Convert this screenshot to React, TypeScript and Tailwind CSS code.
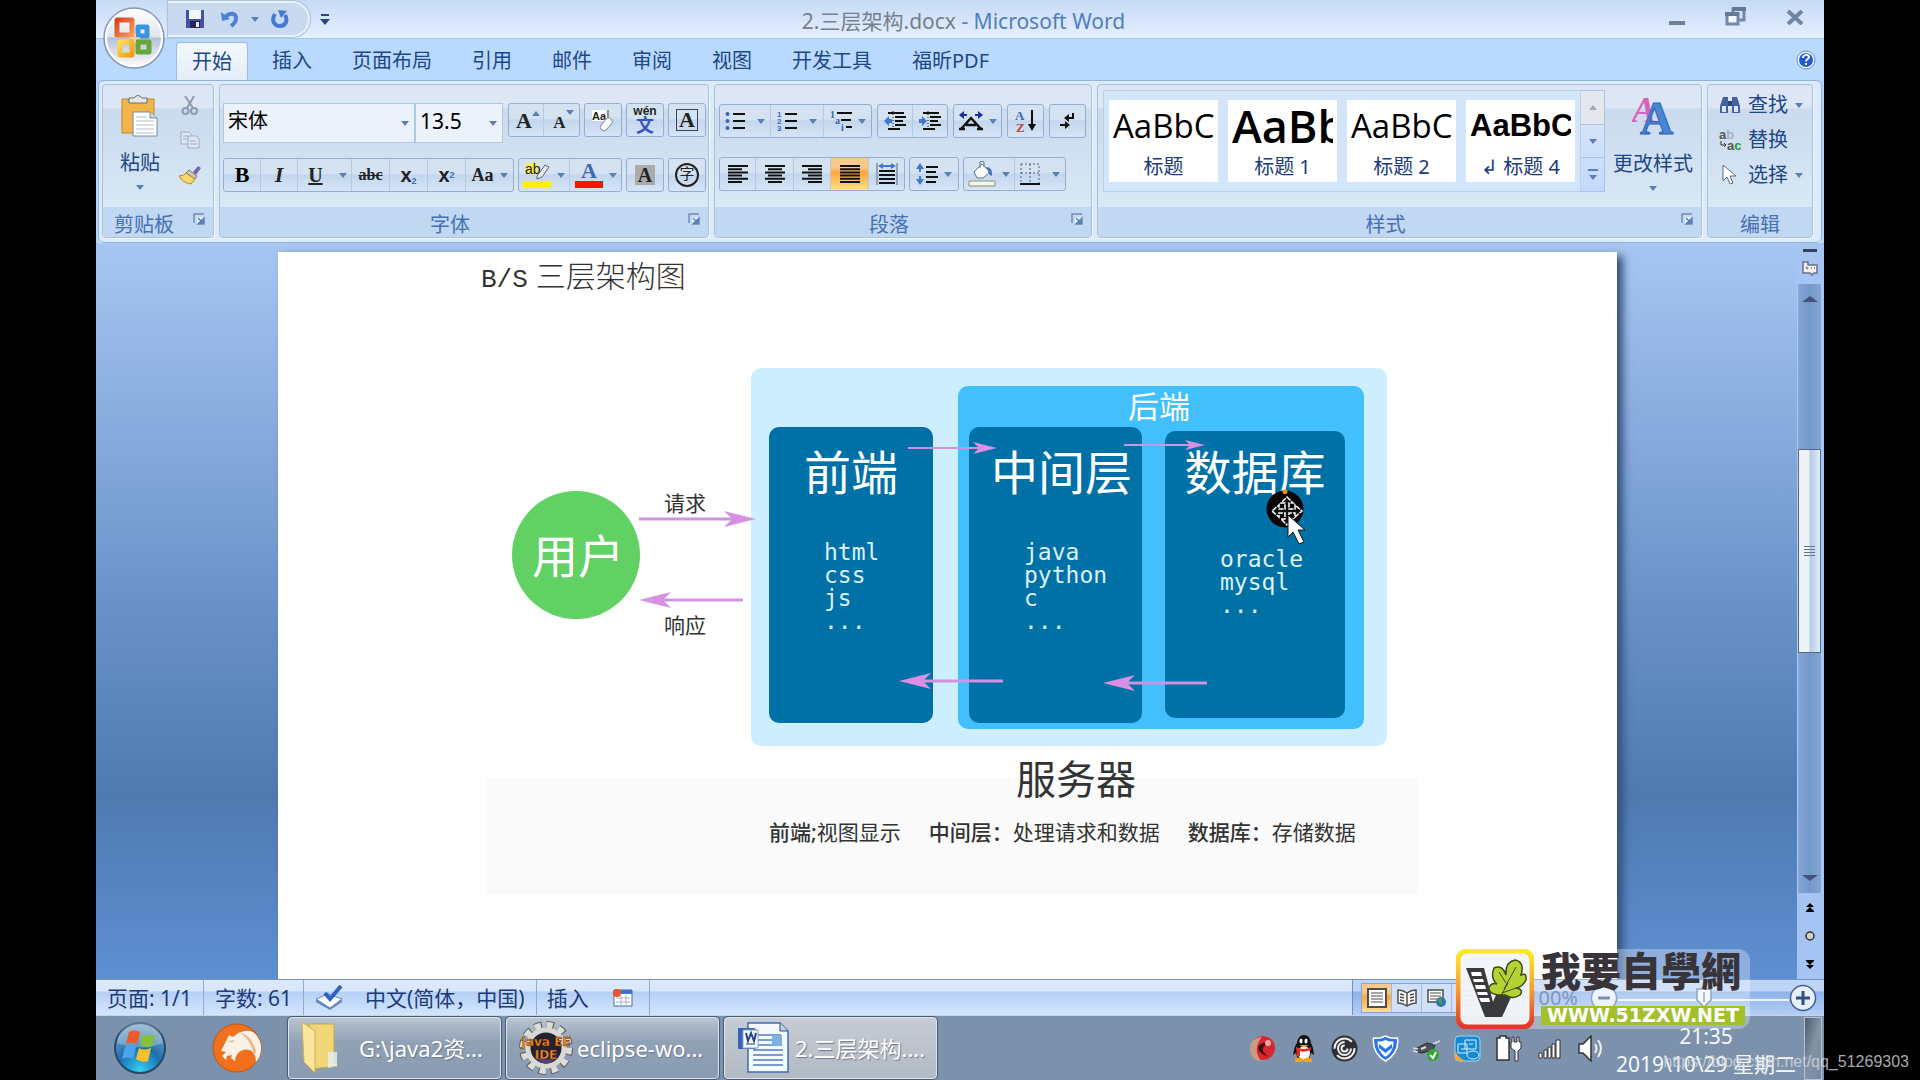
import type { ReactNode } from "react";
import { clsx } from "clsx";

const TABS = ["插入", "页面布局", "引用", "邮件", "审阅", "视图", "开发工具", "福昕PDF"];

const STYLES = [
  { name: "标题", sample: "AaBbC", className: "text-[33px]" },
  { name: "标题 1", sample: "AaBb", className: "text-[45px] font-semibold" },
  { name: "标题 2", sample: "AaBbC", className: "text-[33px]" },
  { name: "↲ 标题 4", sample: "AaBbC", className: "text-[31px] font-bold font-['Liberation_Sans']!" },
];

/* ---------- shared bits ---------- */

function Caret({ className }: { className?: string }) {
  return (
    <svg viewBox="0 0 8 5" className={clsx("h-[5px] w-2 shrink-0 fill-[#5b7fb5]", className)}>
      <path d="M0 0h8L4 5z" />
    </svg>
  );
}

function Launcher({ label }: { label: string }) {
  return (
    <button aria-label={label} className="absolute right-2 top-1.5">
      <svg viewBox="0 0 12 12" className="h-3 w-3" fill="none">
        <path d="M1 10V1h10" stroke="#6d8cba" strokeWidth="1.5" />
        <path d="M4 4h8v8H4z" fill="#eaf3fd" />
        <path d="M5 5l4 4M11 5v6H5z" stroke="#5a80b8" strokeWidth="1.5" fill="#5a80b8" />
      </svg>
    </button>
  );
}

interface RibbonGroupProps {
  title: string;
  className: string;
  launcher?: boolean;
  children: ReactNode;
}

function RibbonGroup({ title, className, launcher = true, children }: RibbonGroupProps) {
  return (
    <section
      className={clsx(
        "flex flex-col overflow-hidden rounded border border-[#a9c0dd] bg-linear-to-b from-[#dce6f4] from-15% via-[#cbdaec] via-16% to-[#d8e8f6] to-80% shadow-[1px_1px_0_#eef6fe]",
        className
      )}
    >
      <div className="h-[124px]">{children}</div>
      <div
        className={clsx(
          "relative h-[30px] bg-[#c0d8f1] pt-1.5 text-center leading-6 text-[#4671b3]",
          launcher && "pr-7"
        )}
      >
        {title}
        {launcher && <Launcher label={`${title}设置`} />}
      </div>
    </section>
  );
}

function ToolSet({ children }: { children: ReactNode }) {
  return (
    <div className="flex h-[34px] divide-x divide-[#b3c9e5] overflow-hidden rounded-[3px] border border-[#93aed2] bg-linear-to-b from-[#d5e2f2] from-45% via-[#c3d6ed] via-50% to-[#d6e5f6]">
      {children}
    </div>
  );
}

interface ToolProps {
  label: string;
  className: string;
  menu?: boolean;
  active?: boolean;
  children: ReactNode;
}

function Tool({ label, className, menu, active, children }: ToolProps) {
  return (
    <button
      aria-label={label}
      aria-pressed={active}
      className={clsx(
        "flex items-center justify-center gap-1.5 leading-none",
        active && "bg-linear-to-b from-[#fbc98a] from-30% via-[#fca53c] via-45% to-[#fee08a]",
        className
      )}
    >
      {children}
      {menu && <Caret />}
    </button>
  );
}

// Each row is [x1, x2]; rows are spread evenly over the icon's height
function Lines({ rows, className = "h-[18px] w-5" }: { rows: number[][]; className?: string }) {
  return (
    <svg viewBox="0 0 20 18" className={className} stroke="#111" strokeWidth="2">
      {rows.map(([a, b], i) => (
        <path key={i} d={`M${a} ${1 + (i * 16) / (rows.length - 1)}H${b}`} />
      ))}
    </svg>
  );
}

/* ---------- title bar and tabs ---------- */

function OfficeButton() {
  return (
    <button aria-label="Office 按钮" className="absolute left-[7px] top-1.5 z-10">
      <svg viewBox="0 0 62 64" className="h-16 w-[62px]">
        <defs>
          <linearGradient id="orb" x1="0" y1="0" x2="0" y2="1">
            <stop offset="0" stopColor="#ffffff" />
            <stop offset=".48" stopColor="#dfe5ef" />
            <stop offset=".5" stopColor="#b3c1d8" />
            <stop offset="1" stopColor="#ffffff" />
          </linearGradient>
          <linearGradient id="red" x1="0" y1="0" x2="1" y2="1">
            <stop offset="0" stopColor="#d9431c" />
            <stop offset="1" stopColor="#f79b5c" />
          </linearGradient>
          <linearGradient id="yellow" x1="0" y1="0" x2="1" y2="1">
            <stop offset="0" stopColor="#fddc4f" />
            <stop offset="1" stopColor="#f19a13" />
          </linearGradient>
        </defs>
        <circle cx="31" cy="32" r="30" fill="url(#orb)" stroke="#8296b8" strokeWidth="1.5" />
        <circle cx="31" cy="32" r="28" fill="none" stroke="#fff" strokeWidth="2" />
        <g fill="none" strokeLinejoin="round">
          <path d="M14 14h15v15H14z" stroke="url(#red)" strokeWidth="5" />
          <path d="M35 21h9v9h-9z" stroke="#3b94dc" strokeWidth="5" />
          <path d="M17 36h12v13H17z" stroke="url(#yellow)" strokeWidth="5" />
          <path d="M35 36h11v10H35z" stroke="#69a63a" strokeWidth="5" />
        </g>
        <path d="M27 32h10M32 27v10" stroke="#f4c9a0" strokeWidth="2" />
      </svg>
    </button>
  );
}

function TitleBar() {
  return (
    <header className="flex h-[38px] items-center bg-linear-to-b from-[#c6daf5] via-[#d6e4fb] to-[#e6f0fc]">
      <div className="ml-[72px] flex h-9 w-[142px] items-center rounded-r-full border-2 border-l-0 border-[#e9f2fd] bg-[#c9d9f0] pl-[17px] shadow-[0_0_1px_1px_#a9bfdd]">
        <button aria-label="保存">
          <svg viewBox="0 0 20 20" className="h-5 w-5">
            <path d="M1 1h18v18H1z" fill="#454fa8" />
            <path d="M4 1h12v9H4z" fill="#f2f6ff" />
            <path d="M5 12h10v7H5z" fill="#23264d" />
            <path d="M11 13h3v5h-3z" fill="#e4e8f8" />
          </svg>
        </button>
        <button aria-label="撤消" className="ml-4 flex items-center gap-3">
          <svg viewBox="0 0 18 18" className="h-[18px] w-[18px]">
            <path d="M4 7c5-5 11-4 11 1 0 3-2 6-5 8" fill="none" stroke="#4d82d6" strokeWidth="4" />
            <path d="M0 2l1 9 8-2z" fill="#4d82d6" />
          </svg>
          <Caret />
        </button>
        <button aria-label="恢复" className="ml-3">
          <svg viewBox="0 0 18 18" className="h-[18px] w-[18px]">
            <path d="M4 4c-4 6-1 12 5 12s8-6 5-11" fill="none" stroke="#4479d4" strokeWidth="4" />
            <path d="M7 0l9 1-6 7z" fill="#4479d4" />
          </svg>
        </button>
      </div>
      <button aria-label="自定义快速访问工具栏" className="ml-2.5">
        <svg viewBox="0 0 10 11" className="h-[11px] w-2.5 fill-[#27457c]">
          <path d="M1 0h8v2H1zM0 5h10l-5 6z" />
        </svg>
      </button>
      <h1 className="flex-1 whitespace-pre pr-[72px] pt-1 text-center text-[21px] text-[#4f7fc0]">
        <span className="text-[#74808f]">2.三层架构.docx</span> - Microsoft Word
      </h1>
      <div className="mr-5 flex items-center gap-10 pb-1">
        <button aria-label="最小化" className="pt-3">
          <svg viewBox="0 0 16 4" className="h-1 w-4">
            <path d="M0 0h16v4H0z" fill="#6d7f9c" />
          </svg>
        </button>
        <button aria-label="还原">
          <svg viewBox="0 0 21 20" className="h-5 w-[21px]" fill="none" stroke="#7488aa" strokeWidth="3">
            <path d="M8 6V2h11v11h-5" />
            <path d="M2 7h11v10H2z" fill="#f0f6ff" />
            <path d="M0 7h14M7 2h14" strokeWidth="4" stroke="#66789a" />
          </svg>
        </button>
        <button aria-label="关闭">
          <svg viewBox="0 0 18 15" className="h-[15px] w-[18px]">
            <path d="M2 1l14 13M16 1L2 14" stroke="#6f83a5" strokeWidth="4" />
          </svg>
        </button>
      </div>
    </header>
  );
}

function TabRow() {
  return (
    <nav className="flex h-[42px] items-end gap-2 border-t border-[#a5cbe4] bg-[#bad9ff] pl-20 text-[#1d4788]">
      <button className="h-[38px] rounded-t border border-b-0 border-[#9cbde8] bg-linear-to-b from-[#f3f8fe] to-[#e2edf9] px-[15px]">
        开始
      </button>
      {TABS.map((tab) => (
        <button key={tab} className="h-[38px] px-4">
          {tab}
        </button>
      ))}
      <button aria-label="帮助" className="mb-2.5 ml-auto mr-2">
        <svg viewBox="0 0 20 20" className="h-5 w-5">
          <circle cx="10" cy="10" r="9" fill="#f1f6ff" stroke="#6c8bbd" />
          <circle cx="10" cy="10" r="7" fill="#2259d6" />
          <path d="M7 8c0-4 6-4 6-1 0 2-3 2-3 4.500M10 13v2" fill="none" stroke="#fff" strokeWidth="2" />
        </svg>
      </button>
    </nav>
  );
}

/* ---------- ribbon groups ---------- */

function ClipboardGroup() {
  return (
    <RibbonGroup title="剪贴板" className="w-28">
      <div className="flex h-full pl-[14px] text-[#1d4788]">
        <button className="flex w-[46px] flex-col items-center pt-2.5">
          <svg viewBox="0 0 38 42" className="h-[42px] w-[38px]">
            <path d="M1 4h32v34H1z" fill="#f3b44c" stroke="#b98837" />
            <path d="M8 3h5q4-5 8 0h5v5H8z" fill="#e8e8e8" stroke="#6c6c6c" />
            <path d="M12 17h17l7 6v18H12z" fill="#fff" stroke="#7b89a5" />
            <path d="M29 17v6h7" fill="#cfdaec" stroke="#7b89a5" />
            <path d="M15 22h11M15 26h18M15 30h18M15 34h18M15 38h18" stroke="#b1bccd" />
          </svg>
          <span className="whitespace-nowrap pt-3">粘贴</span>
          <Caret className="mt-2" />
        </button>
        <div className="ml-4 flex flex-col items-center gap-4 pt-2.5">
          <button aria-label="剪切">
            <svg viewBox="0 0 18 20" className="h-5 w-[18px]" fill="none" stroke="#8c9bb3" strokeWidth="2">
              <path d="M4 1l8 12M13 1L6 13" />
              <circle cx="4.500" cy="16" r="3" />
              <circle cx="13" cy="16" r="3" />
            </svg>
          </button>
          <button aria-label="复制">
            <svg viewBox="0 0 20 18" className="h-[18px] w-5" fill="#dfe7f2" stroke="#9aaac4">
              <path d="M1 1h8l3 3v9H1z" />
              <path d="M8 5h8l3 3v9H8z" />
              <path d="M3 5h5M3 8h4M10 10h6M10 13h7" />
            </svg>
          </button>
          <button aria-label="格式刷">
            <svg viewBox="0 0 22 20" className="h-5 w-[22px]">
              <path d="M14 7l5-6 3 2-5 7z" fill="#7466b5" />
              <path d="M10 5l8 6-2 3-9-6z" fill="#c9c6c0" stroke="#8d7b52" />
              <path d="M7 8l9 6-4 5Q4 18 0 11q5 0 7-3z" fill="#f6d768" stroke="#b1893a" />
            </svg>
          </button>
        </div>
      </div>
    </RibbonGroup>
  );
}

function FontGroup() {
  return (
    <RibbonGroup title="字体" className="w-[490px]">
      <div className="flex flex-col gap-[15px] pl-[3px] pt-[18px] font-['Liberation_Serif','Noto_Sans_CJK_SC',serif] text-[#222]">
        <div className="flex h-10 items-start">
          <div className="relative">
            <select
              aria-label="字体"
              className="h-10 w-48 appearance-none border border-[#b0c8e6] bg-[#ebf2fb] pb-1 pl-1 font-['Noto_Sans','Noto_Sans_CJK_SC',sans-serif] text-xl text-black"
            >
              <option>宋体</option>
            </select>
            <Caret className="pointer-events-none absolute right-1.5 top-[18px]" />
          </div>
          <div className="relative">
            <select
              aria-label="字号"
              className="h-10 w-[88px] appearance-none border border-[#b0c8e6] bg-[#ebf2fb] pb-1 pl-1 font-['Noto_Sans',sans-serif] text-[21px] text-black"
            >
              <option>13.5</option>
            </select>
            <Caret className="pointer-events-none absolute right-1.5 top-[18px]" />
          </div>
          <div className="ml-[5px] flex gap-1">
            <ToolSet>
              <Tool label="增大字体" className="w-[35px] gap-0! pt-0.5 pl-1">
                <b className="text-[22px]">A</b>
                <Caret className="mb-4 rotate-180" />
              </Tool>
              <Tool label="缩小字体" className="w-[35px] gap-0! pl-1">
                <b className="pt-1 text-[17px]">A</b>
                <Caret className="mb-4" />
              </Tool>
            </ToolSet>
            <ToolSet>
              <Tool label="清除格式" className="w-9">
                <svg viewBox="0 0 24 24" className="h-6 w-6">
                  <path d="M1 2h17v11H1z" fill="#fff" />
                  <text x="1" y="12" fontSize="11" fontWeight="700" fontFamily="Liberation Sans" fill="#222">Aa</text>
                  <path d="M17 2v9" stroke="#222" />
                  <rect x="12" y="9" width="7" height="14" rx="3" fill="#fff" stroke="#8a93a5" transform="rotate(40 15 16)" />
                </svg>
              </Tool>
            </ToolSet>
            <ToolSet>
              <Tool label="拼音指南" className="w-9 flex-col gap-0!">
                <span className="font-['Liberation_Sans'] text-[12px] font-bold leading-[12px]">wén</span>
                <span className="text-lg font-bold leading-[18px] text-[#3356c4]">文</span>
              </Tool>
            </ToolSet>
            <ToolSet>
              <Tool label="字符边框" className="w-9">
                <b className="h-[22px] w-[22px] border border-[#39465c] text-center text-[22px] leading-5">A</b>
              </Tool>
            </ToolSet>
          </div>
        </div>
        <div className="flex gap-1">
          <ToolSet>
            <Tool label="加粗" className="w-[37px]"><b className="text-[22px] text-black">B</b></Tool>
            <Tool label="倾斜" className="w-[37px]"><i className="text-[22px] font-bold">I</i></Tool>
            <Tool label="下划线" menu className="w-[54px] gap-4! pl-1.5"><b className="text-xl/none underline">U</b></Tool>
            <Tool label="删除线" className="w-[38px]"><s className="text-base/none font-bold">abc</s></Tool>
            <Tool label="下标" className="w-[38px] font-['Liberation_Sans']">
              <b className="text-xl/none">x<sub className="text-[9px] text-[#3f6cc0]">2</sub></b>
            </Tool>
            <Tool label="上标" className="w-[38px] font-['Liberation_Sans']">
              <b className="text-xl/none">x<sup className="text-[9px] text-[#3f6cc0]">2</sup></b>
            </Tool>
            <Tool label="更改大小写" menu className="w-[47px]"><b className="text-lg/none">Aa</b></Tool>
          </ToolSet>
          <ToolSet>
            <Tool label="突出显示" menu className="w-[51px]">
              <svg viewBox="0 0 28 26" className="h-[26px] w-7">
                <path d="M3 1h11v11H3z" fill="#fbf04a" />
                <text x="2" y="12" fontSize="14" fontFamily="Liberation Sans" fill="#222">ab</text>
                <path d="M14 14l8-11 4 2-7 10-5 2z" fill="#e8eaf0" stroke="#59647a" />
                <path d="M0 19h28v7H0z" fill="#ffef00" />
              </svg>
            </Tool>
            <Tool label="字体颜色" menu className="w-[51px]">
              <svg viewBox="0 0 28 26" className="h-[26px] w-7">
                <text x="6" y="16" fontSize="22" fontWeight="700" fontFamily="Liberation Serif" fill="#3f68b5">A</text>
                <path d="M0 19h28v7H0z" fill="#fb1405" />
              </svg>
            </Tool>
          </ToolSet>
          <ToolSet>
            <Tool label="字符底纹" className="w-9">
              <b className="w-5 bg-[#ababab] text-center text-xl/none">A</b>
            </Tool>
          </ToolSet>
          <ToolSet>
            <Tool label="带圈字符" className="w-9">
              <span className="h-6 w-6 rounded-full border-2 border-[#222] text-center text-[15px] leading-[19px]">字</span>
            </Tool>
          </ToolSet>
        </div>
      </div>
    </RibbonGroup>
  );
}

function ListIcon({ marks }: { marks?: string[] }) {
  return (
    <svg viewBox="0 0 20 20" className="h-5 w-5">
      <path d="M8 3h12M8 10h12M8 17h12" stroke="#111" strokeWidth="2" />
      {marks
        ? marks.map((mark, i) => (
            <text key={mark} x="0" y={6 + i * 7} fontSize="8" fontWeight="700" fontFamily="Liberation Sans" fill="#3a66ba">
              {mark}
            </text>
          ))
        : [3, 10, 17].map((y) => <circle key={y} cx="2.500" cy={y} r="2" fill="#3a66ba" />)}
    </svg>
  );
}

function IndentIcon({ flip }: { flip?: boolean }) {
  return (
    <svg viewBox="0 0 22 20" className="h-5 w-[22px]">
      <path d="M4 2h16M11 6h11M11 10h8M11 14h11M4 18h12" stroke="#111" strokeWidth="2" />
      <path d="M9 0v20" stroke="#111" strokeDasharray="1 2" />
      <path d={flip ? "M8 10L3 5v3H0v4h3v3z" : "M0 10l5-5v3h3v4H5v3z"} fill="#3f78d0" />
    </svg>
  );
}

function ParagraphGroup() {
  return (
    <RibbonGroup title="段落" className="w-[378px]">
      <div className="flex flex-col gap-[19px] pl-1 pt-[19px]">
        <div className="flex gap-[5px]">
          <ToolSet>
            <Tool label="项目符号" menu className="w-[51px] gap-3!"><ListIcon /></Tool>
            <Tool label="编号" menu className="w-[53px] gap-3!"><ListIcon marks={["1", "2", "3"]} /></Tool>
            <Tool label="多级列表" menu className="w-[47px]">
              <svg viewBox="0 0 22 22" className="h-[22px] w-[22px]">
                <path d="M7 3h15M11 10h10M16 17h6" stroke="#111" strokeWidth="2" />
                <g fontSize="10" fontWeight="700" fontFamily="Liberation Serif" fill="#3a66ba">
                  <text x="0" y="8">1</text>
                  <text x="5" y="14">a</text>
                  <text x="11" y="21">i</text>
                </g>
              </svg>
            </Tool>
          </ToolSet>
          <ToolSet>
            <Tool label="减少缩进量" className="w-[35px]"><IndentIcon /></Tool>
            <Tool label="增加缩进量" className="w-[34px]"><IndentIcon flip /></Tool>
          </ToolSet>
          <ToolSet>
            <Tool label="中文版式" menu className="w-[47px]">
              <svg viewBox="0 0 24 20" className="h-5 w-6" fill="none">
                <path d="M2 18L12 7l10 11M7 14h10M0 18h6M18 18h6" stroke="#111" strokeWidth="2.500" />
                <path d="M0 4l5-4v3h3v2H5v3zM24 4l-5-4v3h-3v2h3v3z" fill="#1e2fae" />
              </svg>
            </Tool>
          </ToolSet>
          <ToolSet>
            <Tool label="排序" className="w-[35px]">
              <svg viewBox="0 0 22 24" className="h-6 w-[22px]">
                <text x="0" y="11" fontSize="13" fontFamily="Liberation Serif" fontWeight="700" fill="#3966bb">A</text>
                <text x="1" y="23" fontSize="13" fontFamily="Liberation Serif" fontWeight="700" fill="#b5443f">Z</text>
                <path d="M17 1v18" stroke="#111" strokeWidth="2" />
                <path d="M13 15h8l-4 7z" fill="#111" />
              </svg>
            </Tool>
          </ToolSet>
          <ToolSet>
            <Tool label="显示编辑标记" className="w-[35px]">
              <svg viewBox="0 0 16 18" className="h-[18px] w-4">
                <path d="M13 1v5H8M0 13h7" fill="none" stroke="#111" strokeWidth="2" />
                <path d="M4 6l5-4v8zM10 13l-5-4v8z" fill="#111" />
              </svg>
            </Tool>
          </ToolSet>
        </div>
        <div className="flex gap-1">
          <ToolSet>
            <Tool label="左对齐" className="w-9"><Lines rows={[[0, 20], [0, 14], [0, 20], [0, 14], [0, 20], [0, 14]]} /></Tool>
            <Tool label="居中" className="w-[38px]"><Lines rows={[[0, 20], [3, 17], [0, 20], [3, 17], [0, 20], [3, 17]]} /></Tool>
            <Tool label="右对齐" className="w-[37px]"><Lines rows={[[0, 20], [6, 20], [0, 20], [6, 20], [0, 20], [6, 20]]} /></Tool>
            <Tool label="两端对齐" active className="w-[38px]"><Lines rows={[[0, 20], [0, 20], [0, 20], [0, 20], [0, 20], [0, 20]]} /></Tool>
            <Tool label="分散对齐" className="w-[35px]">
              <svg viewBox="0 0 22 22" className="h-[22px] w-[22px]">
                <path d="M3 8h16M3 12h16M3 16h16M3 20h16" stroke="#111" strokeWidth="2" />
                <path d="M1 0v22M21 0v22" stroke="#56627a" />
                <path d="M2 3l5-3v2h8V0l5 3-5 3V4H7v2z" fill="#3f78d0" />
              </svg>
            </Tool>
          </ToolSet>
          <ToolSet>
            <Tool label="行距" menu className="w-12">
              <svg viewBox="0 0 22 24" className="h-6 w-[22px]">
                <path d="M10 5h12M10 10h10M10 15h12M10 20h10" stroke="#111" strokeWidth="2" />
                <path d="M4 1l4 6H5v3H3V7H0zM4 23l4-6H5v-3H3v3H0z" fill="#3f78d0" />
              </svg>
            </Tool>
          </ToolSet>
          <ToolSet>
            <Tool label="底纹" menu className="w-[51px]">
              <svg viewBox="0 0 28 26" className="h-[26px] w-7">
                <path d="M6 11l8-8 8 8-7 6H9z" fill="#fff" stroke="#62708a" />
                <path d="M12 7V1q2-2 4 0v5" fill="none" stroke="#62708a" />
                <path d="M18 6q7 0 6 9-4-2-4-5z" fill="#4475c8" />
                <path d="M1 20h26v5H1z" fill="#f4f4ee" stroke="#8c9270" />
              </svg>
            </Tool>
            <Tool label="边框" menu className="w-[50px] gap-3!">
              <svg viewBox="0 0 20 22" className="h-[22px] w-5" fill="none" stroke="#56627a">
                <path d="M1 1h18v19M1 1v19M10 1v19M1 10h18" strokeDasharray="2 2" />
                <path d="M0 21h20" stroke="#111" strokeWidth="2" />
              </svg>
            </Tool>
          </ToolSet>
        </div>
      </div>
    </RibbonGroup>
  );
}

function StylesGroup() {
  return (
    <RibbonGroup title="样式" className="flex-1">
      <div className="flex pl-[5px] pt-[5px]">
        <div className="flex h-[102px] items-center gap-[10px] border border-[#b9cfeb] bg-[#d3e5f9] px-[5px]">
          {STYLES.map((style) => (
            <button key={style.name} className="flex h-[82px] w-[109px] flex-col overflow-hidden bg-white px-1">
              <span className={clsx("h-[52px] w-full overflow-hidden whitespace-nowrap text-left font-['Open_Sans'] leading-[52px] text-black", style.className)}>
                {style.sample}
              </span>
              <span className="w-full text-center leading-[30px] text-[#1b3a80]">{style.name}</span>
            </button>
          ))}
        </div>
        <div className="flex h-[102px] w-6 flex-col divide-y divide-[#a9c3e6] border border-l-0 border-[#a9c3e6] bg-linear-to-b from-[#dbe9fa] to-[#c4dafa]">
          <button aria-label="向上" className="flex flex-1 items-center justify-center bg-[#e4e8ee]">
            <Caret className="rotate-180 fill-[#a5a9b0]!" />
          </button>
          <button aria-label="向下" className="flex flex-1 items-center justify-center">
            <Caret />
          </button>
          <button aria-label="其他" className="flex flex-1 flex-col items-center justify-center gap-1">
            <span className="h-0.5 w-2.5 bg-[#5b7fb5]" />
            <Caret />
          </button>
        </div>
        <button className="flex flex-1 flex-col items-center pt-1.5 text-[#1d4788]">
          <svg viewBox="0 0 42 40" className="h-10 w-[42px]" fontFamily="Liberation Serif" fontWeight="700">
            <text x="0" y="26" fontSize="36" fontStyle="italic" fill="#d363bd">A</text>
            <text x="8" y="38" fontSize="46" fill="#4a85d6" stroke="#2e62b3">A</text>
          </svg>
          <span className="whitespace-nowrap pt-3.5">更改样式</span>
          <Caret className="mt-2" />
        </button>
      </div>
    </RibbonGroup>
  );
}

function EditGroup() {
  return (
    <RibbonGroup title="编辑" className="w-[106px]" launcher={false}>
      <div className="flex flex-col gap-[7px] pl-[11px] pt-1.5 text-[#1d4788]">
        <button className="flex items-center gap-[7px]">
          <svg viewBox="0 0 22 20" className="h-5 w-[22px]">
            <path d="M1 11L4 2h5v16H1zM21 11l-3-9h-5v16h8z" fill="#42639f" />
            <path d="M9 6h4v5H9z" fill="#2b4678" />
            <path d="M3 11h4v6H3zM15 11h4v6h-4z" fill="#dbe7fa" />
          </svg>
          查找
          <Caret />
        </button>
        <button className="flex items-center gap-[7px]">
          <svg viewBox="0 0 22 20" className="h-5 w-[22px]" fontSize="13" fontWeight="700" fontFamily="Liberation Sans">
            <text x="0" y="9" fill="#555">a<tspan fill="#a7b2c4">b</tspan></text>
            <text x="8" y="20" fill="#555">a<tspan fill="#1f9a2b">c</tspan></text>
            <path d="M2 11v4h5M5 13l2 2-2 2" fill="none" stroke="#333" />
          </svg>
          替换
        </button>
        <button className="flex items-center gap-[7px]">
          <svg viewBox="0 0 22 20" className="h-5 w-[22px]">
            <path d="M4 0v16l4-4 3 7 3-1-3-7h6z" fill="#fff" stroke="#5f6d86" />
          </svg>
          选择
          <Caret />
        </button>
      </div>
    </RibbonGroup>
  );
}

function Ribbon() {
  return (
    <div className="mx-0.5 flex h-[163px] gap-[5px] rounded-md border border-[#8fb4dd] bg-[#dcebf9] pb-1 pl-[3px] pr-2 pt-[3px] shadow-[0_2px_0_#c9f0fa]">
      <ClipboardGroup />
      <FontGroup />
      <ParagraphGroup />
      <StylesGroup />
      <EditGroup />
    </div>
  );
}

/* ---------- document ---------- */

// Concave arrow head at x2, pointing away from x1
function Arrow({ x1, x2, y, half = 8 }: { x1: number; x2: number; y: number; half?: number }) {
  const dir = x2 > x1 ? -1 : 1;
  const back = x2 + dir * half * 4;
  const notch = x2 + dir * half * 3;
  return (
    <g fill="#da90e2">
      <path d={`M${x1} ${y}H${notch}`} stroke="#cf93e3" strokeWidth={half > 6 ? 3 : 2} />
      <path d={`M${x2} ${y}L${back} ${y - half}L${notch} ${y}L${back} ${y + half}z`} />
    </g>
  );
}

interface LayerBoxProps {
  title: string;
  items: string[];
  className: string;
  listClassName: string;
}

function LayerBox({ title, items, className, listClassName }: LayerBoxProps) {
  return (
    <div className={clsx("absolute rounded-[10px] bg-[#0071a7] text-white", className)}>
      <h3 className="whitespace-nowrap text-center text-[47px] leading-[47px]">{title}</h3>
      <ul className={clsx("pl-[55px] font-['DejaVu_Sans_Mono',monospace] text-[23px] leading-[23px] text-[#dcf1fb]", listClassName)}>
        {items.map((item) => (
          <li key={item}>{item}</li>
        ))}
      </ul>
    </div>
  );
}

function MovePointer() {
  return (
    <svg viewBox="0 0 42 56" className="absolute left-[785px] top-[150px] h-14 w-[42px]">
      <circle cx="19" cy="19" r="18.500" fill="#0b0508" />
      <circle cx="19" cy="1.500" r="2.500" fill="#e0920f" />
      <path d="M21 7l6 6h-4v6h6v-4l7 6-7 6v-4h-6v6h4l-6 6-6-6h4v-6h-6v4l-7-6 7-6v4h6v-6h-4z" fill="#111" stroke="#fff" strokeWidth="1.500" strokeDasharray="5 1" />
      <path d="M22 25v22l5-5 6 12 5-2-6-12h7z" fill="#fff" stroke="#111" />
    </svg>
  );
}

function Diagram() {
  return (
    <figure className="relative mt-[45px] h-[560px] w-full text-[#333]">
      <div className="absolute bottom-[5px] left-[5px] right-[-5px] h-[117px] bg-[#fafafa]" />
      <div className="absolute left-[270px] top-7 h-[378px] w-[636px] rounded-[10px] bg-[#cdeefe]" />
      <div className="absolute left-[477px] top-[46px] h-[343px] w-[406px] rounded-[10px] bg-[#41c0fd] pr-1 pt-1 text-center text-[31px] leading-8 text-white">
        后端
      </div>
      <LayerBox
        title="前端"
        items={["html", "css", "js", "..."]}
        className="left-[288px] top-[87px] h-[296px] w-[164px] pt-[22px]"
        listClassName="mt-[45px]"
      />
      <LayerBox
        title="中间层"
        items={["java", "python", "c", "..."]}
        className="left-[488px] top-[87px] h-[296px] w-[173px] pl-3 pt-[22px]"
        listClassName="mt-[45px] -ml-3"
      />
      <LayerBox
        title="数据库"
        items={["oracle", "mysql", "..."]}
        className="left-[684px] top-[91px] h-[287px] w-[180px] pt-[18px]"
        listClassName="mt-[52px]"
      />
      <div className="absolute left-[31px] top-[151px] flex h-32 w-32 items-center justify-center rounded-full bg-[#61d164] pl-1 text-[46px] text-white">
        用户
      </div>
      <span className="absolute left-[183px] top-[151px] text-[21px] leading-6">请求</span>
      <span className="absolute left-[183px] top-[273px] text-[21px] leading-6">响应</span>
      <svg viewBox="0 0 933 560" className="absolute left-0 top-0 h-[560px] w-[933px]">
        <Arrow x1={158} x2={275} y={179} />
        <Arrow x1={262} x2={158} y={260} />
        <Arrow x1={427} x2={516} y={108} half={6} />
        <Arrow x1={643} x2={724} y={105} half={5} />
        <Arrow x1={522} x2={418} y={341} />
        <Arrow x1={726} x2={622} y={343} />
      </svg>
      <strong className="absolute left-[535px] top-[419px] text-[40px] font-normal leading-10">服务器</strong>
      <figcaption className="absolute left-[288px] top-[480px] flex gap-7 whitespace-nowrap text-[21px] leading-6">
        <span><b className="font-medium">前端;</b>视图显示</span>
        <span><b className="font-medium">中间层：</b>处理请求和数据</span>
        <span><b className="font-medium">数据库：</b>存储数据</span>
      </figcaption>
      <MovePointer />
    </figure>
  );
}

function ScrollBar() {
  return (
    <div className="flex w-[27px] flex-col items-center bg-[#a5c4f3] pr-0.5 pt-1.5">
      <span className="h-[3px] w-3.5 bg-[#33445f]" />
      <svg viewBox="0 0 18 16" className="my-2 h-4 w-[18px]" fill="#f3eee9" stroke="#67718a" strokeWidth="1.500">
        <path d="M2 2h5v3h9v8h-3l-2 2-2-2H2z" />
        <path d="M5 7l2 2M10 8h1M13 8h1" />
      </svg>
      <div className="flex w-full flex-1 flex-col items-center border-x border-[#a7caf6] bg-linear-to-r from-[#86a7d6] via-[#7298ca] to-[#86a5d2]">
        <button aria-label="向上滚动" className="py-3">
          <svg viewBox="0 0 16 6" className="h-1.5 w-4 fill-[#41537f]"><path d="M8 0l8 6H0z" /></svg>
        </button>
        <div className="mt-[135px] flex h-[204px] w-full flex-col items-center justify-center gap-0.5 border border-[#56688a] bg-linear-to-r from-[#edf2f6] from-45% via-[#b7cce6] via-55% to-[#e2edf8]">
          <span className="h-px w-[11px] bg-[#63738e]" />
          <span className="h-px w-[11px] bg-[#63738e]" />
          <span className="h-px w-[11px] bg-[#63738e]" />
          <span className="h-px w-[11px] bg-[#63738e]" />
        </div>
        <button aria-label="向下滚动" className="mt-auto py-3">
          <svg viewBox="0 0 16 6" className="h-1.5 w-4 fill-[#41537f]"><path d="M0 0h16L8 6z" /></svg>
        </button>
      </div>
      <div className="flex flex-col items-center gap-[18px] py-2.5">
        <button aria-label="前一页">
          <svg viewBox="0 0 8 10" className="h-2.5 w-2"><path d="M4 0l4 4H0zM4 4l4 4H0zM0 8h8v1H0z" /></svg>
        </button>
        <button aria-label="选择浏览对象">
          <svg viewBox="0 0 10 10" className="h-2.5 w-2.5"><circle cx="5" cy="5" r="4" fill="#cfcfc6" stroke="#333" strokeWidth="1.500" /></svg>
        </button>
        <button aria-label="下一页">
          <svg viewBox="0 0 8 10" className="h-2.5 w-2"><path d="M0 1h8v1H0zM0 2h8L4 6zM0 6h8l-4 4z" /></svg>
        </button>
      </div>
    </div>
  );
}

function Workspace() {
  return (
    <main className="flex flex-1 bg-[linear-gradient(#a7c6f2,#6991c8_50%,#4f7ab0_75%,#5f8fd2)]">
      <div className="flex flex-1 justify-center pl-0.5 pt-[9px]">
        <article className="w-[1339px] bg-white px-[203px] shadow-[6px_4px_8px_#36517c]">
          <h2 className="flex h-[43px] items-baseline gap-2 font-['Noto_Sans_CJK_SC',sans-serif] text-[30px] font-light leading-[44px] text-[#333]">
            <span className="font-['Liberation_Mono'] text-[26px]">B/S</span>三层架构图
          </h2>
          <Diagram />
        </article>
      </div>
      <ScrollBar />
    </main>
  );
}

/* ---------- status bar ---------- */

function StatusBar() {
  return (
    <footer className="flex h-9 items-stretch border-t border-[#7793bd] bg-linear-to-b from-[#dbe8fc] from-30% via-[#b5d0f6] via-35% to-[#d3e5fd] text-[21px] text-[#1e3a78]">
      <button className="px-[11px]">页面: 1/1</button>
      <span className="w-px bg-[#8fabd6]" />
      <button className="px-[11px]">字数: 61</button>
      <span className="w-px bg-[#8fabd6]" />
      <button aria-label="校对" className="pl-[11px] pr-[22px]">
        <svg viewBox="0 0 28 26" className="h-[26px] w-7">
          <path d="M1 14l12-5 14 5-12 9z" fill="#fff" stroke="#6f85ad" />
          <path d="M1 14v3l14 8 12-8v-3l-12 9z" fill="#5f86c8" />
          <path d="M10 8l5 6L26 1" fill="none" stroke="#2f64c4" strokeWidth="4" />
        </svg>
      </button>
      <button className="pr-[11px]">中文(简体，中国)</button>
      <span className="w-px bg-[#8fabd6]" />
      <button className="pl-2.5 pr-6">插入</button>
      <button aria-label="录制宏" className="pr-4">
        <svg viewBox="0 0 20 18" className="h-[18px] w-5">
          <path d="M1 1h18v16H1z" fill="#fff" stroke="#51689a" />
          <path d="M1 1h18v4H1z" fill="#3c73cf" />
          <path d="M3 9h14M3 13h14M8 6v10M13 6v10" stroke="#9fb2d3" />
          <circle cx="4" cy="4" r="4" fill="#e8552d" />
        </svg>
      </button>
      <span className="w-px bg-[#8fabd6]" />
      <div className="ml-auto flex items-center border-l border-[#6d8fc2] bg-linear-to-b from-[#bfd5f7] from-30% via-[#8fb2e8] via-35% to-[#b3cff8] pl-2 pr-[7px]">
        <div className="flex h-[30px] divide-x divide-[#9fbce6] border border-[#88a5d2] bg-[#cfe0f8]">
          <Tool label="页面视图" active className="w-[30px]">
            <svg viewBox="0 0 20 20" className="h-5 w-5" fill="#fff" stroke="#4d4d4d" strokeWidth="2">
              <path d="M1 1h18v18H1z" />
              <path d="M4 5h12M4 8h12M4 11h12M4 14h12" strokeWidth="1" />
            </svg>
          </Tool>
          <Tool label="阅读版式" className="w-[30px]">
            <svg viewBox="0 0 20 20" className="h-5 w-5" fill="#fff" stroke="#4d4d4d" strokeWidth="1.500">
              <path d="M1 2q5 0 9 3 4-3 9-3v13q-5 0-9 3-4-3-9-3zM10 5v13" />
              <path d="M3 6l4 1M3 9l4 1M3 12l4 1M17 6l-4 1M17 9l-4 1M17 12l-4 1" />
            </svg>
          </Tool>
          <Tool label="Web 版式" className="w-[30px]">
            <svg viewBox="0 0 20 20" className="h-5 w-5">
              <path d="M1 2h15v12H1z" fill="#fff" stroke="#4d4d4d" strokeWidth="1.500" />
              <path d="M3 5h11M3 8h11M3 11h8" stroke="#4d4d4d" />
              <circle cx="14" cy="14" r="5" fill="#2e77b4" />
              <path d="M11 12q3-3 4 0t-2 4z" fill="#4aa04b" />
            </svg>
          </Tool>
          <Tool label="大纲视图" className="w-[30px]"><Lines rows={[[0, 20], [4, 20], [0, 20], [4, 20]]} className="h-4 w-5 opacity-50" /></Tool>
          <Tool label="普通视图" className="w-[30px]"><Lines rows={[[0, 20], [0, 20], [0, 20], [0, 20]]} className="h-4 w-5 opacity-50" /></Tool>
        </div>
        <button className="pl-[14px] text-xl/7 text-[#4665a5]">100%</button>
        <button aria-label="缩小" className="ml-3">
          <svg viewBox="0 0 28 28" className="h-7 w-7">
            <circle cx="14" cy="14" r="12.500" fill="#e5effd" stroke="#5e7cad" strokeWidth="1.500" />
            <path d="M8 14h12" stroke="#46618f" strokeWidth="3" />
          </svg>
        </button>
        <div className="relative h-7 w-[171px]">
          <span className="absolute inset-x-0 top-[15px] h-0.5 bg-[#e8f2ff]" />
          <input
            type="range"
            aria-label="显示比例"
            min={10}
            max={190}
            defaultValue={100}
            className="absolute inset-0 w-full opacity-0"
          />
          <svg viewBox="0 0 16 20" className="pointer-events-none absolute left-[78px] top-1 h-5 w-4">
            <path d="M1 1h14v11l-7 7-7-7z" fill="#f2f7ff" stroke="#5e7cad" strokeWidth="1.500" />
            <path d="M8 4v10" stroke="#8aa2cb" strokeWidth="2" />
          </svg>
        </div>
        <button aria-label="放大">
          <svg viewBox="0 0 28 28" className="h-7 w-7">
            <circle cx="14" cy="14" r="12.500" fill="#e5effd" stroke="#43618f" strokeWidth="1.500" />
            <path d="M7 14h14M14 7v14" stroke="#33507d" strokeWidth="3" />
          </svg>
        </button>
      </div>
    </footer>
  );
}

/* ---------- taskbar ---------- */

function StartOrb() {
  return (
    <svg viewBox="0 0 54 54" className="h-[54px] w-[54px]">
      <defs>
        <radialGradient id="start" cx=".5" cy=".95" r=".9">
          <stop offset="0" stopColor="#37d0f5" />
          <stop offset=".5" stopColor="#1c6fae" />
          <stop offset="1" stopColor="#7fa5c4" />
        </radialGradient>
      </defs>
      <circle cx="27" cy="27" r="25" fill="url(#start)" stroke="#24496b" strokeWidth="2" />
      <path d="M4 22a23 21 0 0146 0q-23 9-46 0z" fill="#fff" opacity=".25" />
      <path d="M16 11q5-3 11 0l-3 12q-6-3-11 0z" fill="#ee5a2b" />
      <path d="M29 13q6 3 14 0l-4 12q-6 3-12-1z" fill="#86c13e" />
      <path d="M12 26q6-3 11 0l-3 12q-5-3-11 0z" fill="#4aa5ee" />
      <path d="M26 27q5 3 12 0l-3 13q-6 2-12-2z" fill="#fcc02b" />
    </svg>
  );
}

function CheetahIcon() {
  return (
    <svg viewBox="0 0 50 50" className="h-[50px] w-[50px]">
      <circle cx="25" cy="25" r="24" fill="#f0701c" stroke="#b85716" />
      <path d="M14 18l3-6 4 2q10-9 20-5 8 6 8 16 0 9-5 14 0-9-6-12-7-2-12 3-3 4-3 8l-4-3 1-3-5 1-1 4-4-4 4-4-5-1 2-4z" fill="#fbf1e7" />
      <path d="M17 18l6-1-3 3zM27 9q13 3 17 20-3 4-2 8 0-18-15-28z" fill="#edb58a" />
    </svg>
  );
}

function FolderIcon() {
  return (
    <svg viewBox="0 0 44 54" className="h-[54px] w-11">
      <path d="M8 3h25v38l4 4-25 3z" fill="#f0d679" stroke="#c7a647" />
      <path d="M27 31h9v14l-9 2z" fill="#e8f0f2" opacity=".8" />
      <path d="M1 1l13 9v42L3 41z" fill="#f9e79c" stroke="#cfae4e" />
    </svg>
  );
}

function EclipseIcon() {
  return (
    <svg viewBox="0 0 54 54" className="h-[54px] w-[54px]">
      <circle cx="27" cy="27" r="23" fill="none" stroke="#5f5f5f" strokeWidth="8" strokeDasharray="7.200 4.840" />
      <circle cx="27" cy="27" r="22.500" fill="none" stroke="#dcdcd8" strokeWidth="7" strokeDasharray="6 5.780" />
      <circle cx="27" cy="27" r="18" fill="#252032" stroke="#d9d9d4" strokeWidth="5" />
      <path d="M15 34q12 9 24 0-4 8-12 9-9-2-12-9z" fill="#57407f" />
      <g fontFamily="DejaVu Sans" fontSize="12" fontWeight="700" fill="#f58a1c" stroke="#4a2505" strokeWidth=".4" textAnchor="middle">
        <text x="27" y="25">Java EE</text>
        <text x="27" y="38">IDE</text>
      </g>
    </svg>
  );
}

function WordIcon() {
  return (
    <svg viewBox="0 0 54 52" className="h-[52px] w-[54px]">
      <path d="M11 1h32l8 8v41H11z" fill="#f4f8ff" stroke="#3f6cb0" strokeWidth="1.500" />
      <path d="M43 1v8h8" fill="#bad0ee" stroke="#33496d" />
      <path d="M16 13h28M16 18h20M16 23h20M16 28h30M16 33h30M16 38h30M16 43h30" stroke="#7a9cd0" strokeWidth="2" />
      <path d="M35 13h10v11H35z" fill="#7eb1e6" />
      <path d="M1 6h16l3 2v18l-3 1H1z" fill="#3762b4" />
      <path d="M6 8h15v18H6z" fill="#f6f9ff" stroke="#88a3cf" />
      <path d="M9 11l2 8 3-8 3 8 2-8" fill="none" stroke="#27458f" strokeWidth="2" />
      <path d="M9 22h9" stroke="#27458f" />
    </svg>
  );
}

function TaskButton({ icon, label, active }: { icon: ReactNode; label: string; active?: boolean }) {
  return (
    <button
      className={clsx(
        "flex h-[62px] w-[213px] items-center rounded border border-[#dce5ee] bg-linear-to-b pl-3 text-[22px] text-white shadow-[0_0_0_1px_#4b5b6e]",
        active ? "from-[#c5ccd5] to-[#b1bac4]" : "from-[#b9c4d1] via-[#91a1b5] via-40% to-[#899cb3]"
      )}
    >
      <span className="w-[58px] shrink-0">{icon}</span>
      <span className="flex-1 truncate text-left [text-shadow:1px_1px_1px_#68788c]">{label}</span>
    </button>
  );
}

function TrayIcons() {
  const size = "h-[27px] w-[27px]";
  return (
    <div className="ml-auto flex gap-[14px]">
      <svg viewBox="0 0 27 27" className={size}>
        <circle cx="14" cy="13" r="12" fill="#d8272d" />
        <path d="M13 2Q1 3 1 14t11 12Q3 14 13 2z" fill="#c99c82" />
        <path d="M21 8q-11-1-12 5 1 6 11 9-8-5-6-9 2-4 7-5z" fill="#451013" />
        <circle cx="19" cy="8" r="3" fill="#f8a5a2" />
      </svg>
      <svg viewBox="0 0 27 27" className={size}>
        <path d="M3 20Q5 9 7 8q1-8 7-8t7 8q2 3 3 12l-3-2-2 6H8l-2-6z" fill="#111" />
        <ellipse cx="14" cy="18" rx="6" ry="7" fill="#fff" />
        <ellipse cx="11" cy="6" rx="1.500" ry="2.500" fill="#fff" />
        <ellipse cx="16" cy="6" rx="1.500" ry="2.500" fill="#fff" />
        <path d="M9 10h10l-5 2z" fill="#f5a21b" />
        <path d="M6 12q8 4 15 0v3q-8 3-11 1v5H7z" fill="#e62b22" />
        <path d="M5 24q4-3 8 0v3H5zM14 24q4-3 8 0v3h-8z" fill="#f5a21b" />
      </svg>
      <svg viewBox="0 0 27 27" className={size}>
        <circle cx="13.500" cy="13.500" r="13" fill="#2d2f31" />
        <g fill="none" stroke="#eee" strokeWidth="2">
          <circle cx="13.500" cy="13.500" r="10" strokeDasharray="24 7" />
          <circle cx="13.500" cy="13.500" r="6.500" strokeDasharray="30 11" />
          <circle cx="13.500" cy="13.500" r="3" strokeDasharray="14 5" />
        </g>
      </svg>
      <svg viewBox="0 0 27 27" className={size}>
        <path d="M13.500 1q6 3 12 2 2 15-12 23Q0 18 1.500 3q6 1 12-2z" fill="#2c74ee" stroke="#fff" strokeWidth="1.500" />
        <path d="M13.500 5q4 2 8 1.500Q22 16 13.500 22 5 16 5.500 6.500q4 .5 8-1.500z" fill="#fff" />
        <path d="M7 9l6.500 5L20 9v4l-6.500 5L7 13z" fill="#2c74ee" />
      </svg>
      <svg viewBox="0 0 27 27" className={size}>
        <path d="M4 13l10-5 8 2-2 5-11 3-5-1z" fill="#4d5156" stroke="#25282b" />
        <path d="M0 13l5 1M0 16l5 1M20 9l7-3" stroke="#ddd" strokeWidth="1.500" />
        <path d="M8 14l5-2" stroke="#d9d9d9" strokeWidth="2" />
        <circle cx="20" cy="20" r="6" fill="#32a631" />
        <path d="M17 20l3 3 3-6" fill="none" stroke="#fff" strokeWidth="2" />
      </svg>
      <svg viewBox="0 0 27 27" className={size}>
        <rect x="1" y="1" width="25" height="25" rx="4" fill="#158ad4" stroke="#9cd3f3" />
        <path d="M1 16q4 8 12 10H5q-4-1-4-4z" fill="#f1a93a" />
        <g fill="none" stroke="#d9f0fd">
          <path d="M11 5h11v9H11zM4 9h9v9H4zM15 9h4M7 14h4" />
          <ellipse cx="19" cy="20" rx="6" ry="4" />
        </g>
      </svg>
      <svg viewBox="0 0 27 27" className={size} stroke="#333" fill="#fff">
        <path d="M2 3h3V1h6v2h3v22H2z" strokeWidth="1.500" />
        <path d="M17 7V2h2v5h3V2h2v5h2v6l-3 3v10h-3V16l-4-3V7z" />
        <path d="M5 6h6v16H5z" stroke="none" />
      </svg>
      <svg viewBox="0 0 27 27" className={size} stroke="#333" fill="#fff">
        <path d="M3 18h3v5H3zM8 15h3v8H8zM12 12h3v11h-3zM16 9h3v14h-3zM20 5h4v18h-4z" />
      </svg>
      <svg viewBox="0 0 27 27" className={size}>
        <path d="M2 9h4l8-8v25l-8-8H2z" fill="#fff" stroke="#333" strokeWidth="1.500" />
        <path d="M18 9q3 4 0 9M21 5q6 8 0 17" fill="none" stroke="#eee" strokeWidth="2" />
      </svg>
    </div>
  );
}

function Taskbar() {
  return (
    <div className="flex h-[65px] items-center border-t border-[#c6d3e3] bg-[#7c92ac] pl-[17px]">
      <button aria-label="开始"><StartOrb /></button>
      <button aria-label="猎豹浏览器" className="ml-[45px]"><CheetahIcon /></button>
      <div className="ml-[26px] flex gap-[5px]">
        <TaskButton icon={<FolderIcon />} label="G:\java2资..." />
        <TaskButton icon={<EclipseIcon />} label="eclipse-wo..." />
        <TaskButton icon={<WordIcon />} label="2.三层架构...." active />
      </div>
      <TrayIcons />
      <div className="ml-[10px] flex w-[184px] flex-col items-center whitespace-nowrap pt-1 text-[21px] leading-7 text-[#f5f8fb]">
        <time>21:35</time>
        <span>2019\10\29 星期二</span>
      </div>
      <button
        aria-label="显示桌面"
        className="ml-1.5 mr-0.5 h-[63px] w-[18px] border border-[#b4c1d0] bg-linear-to-br from-[#4e5e72] via-[#8492a5] to-[#7488a0]"
      />
    </div>
  );
}

/* ---------- overlays ---------- */

function SiteBadge() {
  return (
    <div className="absolute bottom-[51px] right-[74px] flex h-20 w-[294px] rounded-xl bg-white/30">
      <svg viewBox="0 0 78 80" className="h-20 w-[78px] shrink-0">
        <defs>
          <linearGradient id="frame" x1="0" y1="0" x2="0" y2="1">
            <stop offset="0" stopColor="#fde92c" />
            <stop offset=".5" stopColor="#f6a12c" />
            <stop offset="1" stopColor="#e3352c" />
          </linearGradient>
        </defs>
        <rect x="2" y="2" width="74" height="76" rx="9" fill="#f1f4f9" fillOpacity=".93" stroke="url(#frame)" strokeWidth="5" />
        <path d="M10 19h18l9 34 5-12 15 3-11 24H29z" fill="#3a3a3d" />
        <path d="M15 23h10l1 4H16zM17 30h10l1 3H18zM19 36h10l1 4H20zM21 43h10l1 3H22zM23 49h10l1 4H25z" fill="#fff" />
        <g fill="#b4d234" stroke="#3f4a1a" strokeWidth="1.500">
          <path d="M43 46Q32 45 33 38q3-5 8-3-7-6-3-16 8-4 12 7-1-13 9-15 10 2 6 15 6-3 5 5-3 6-9 8 7 2 3 7-7 5-15 0z" />
          <path d="M43 50l9-16M48 40l12-22M50 34l-7-11M46 44l17-6" fill="none" strokeWidth="1" />
        </g>
      </svg>
      <div className="flex flex-1 flex-col pl-[7px] pr-[5px]">
        <span className="flex justify-between whitespace-nowrap text-[40px] font-black leading-[44px] text-[#38343a]">我要自學網</span>
        <span className="mt-[13px] h-[19px] whitespace-nowrap bg-[#a3bf2c] text-center font-['DejaVu_Sans'] text-[19px] font-bold leading-[19px] text-white">
          WWW.51ZXW.NET
        </span>
      </div>
    </div>
  );
}

export default function App() {
  return (
    <div className="relative min-h-screen bg-black px-[5%] font-['Noto_Sans','Noto_Sans_CJK_SC',sans-serif]">
      <div className="relative flex min-h-screen flex-col bg-[#b4d2fa] text-xl leading-7">
        <OfficeButton />
        <TitleBar />
        <TabRow />
        <Ribbon />
        <Workspace />
        <StatusBar />
        <Taskbar />
        <SiteBadge />
      </div>
      <span className="absolute bottom-[6px] right-[11px] font-['Liberation_Sans'] text-base text-[#d5d9de]/80">
        https://blog.csdn.net/qq_51269303
      </span>
    </div>
  );
}
